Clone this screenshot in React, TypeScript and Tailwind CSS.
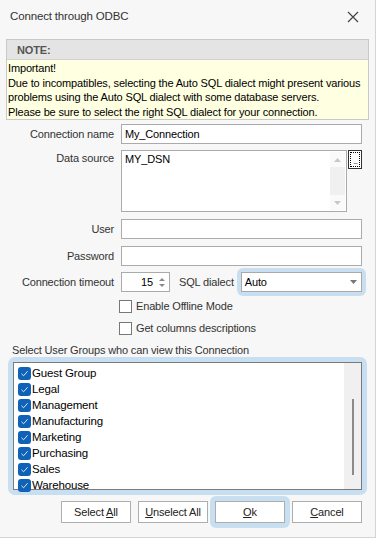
import React from "react";

const groups = ["Guest Group", "Legal", "Management", "Manufacturing", "Marketing", "Purchasing", "Sales", "Warehouse"];

function Check() {
  return (
    <span className="w-[13px] h-[13px] rounded-[3px] bg-[#0f62b6] flex items-center justify-center shrink-0">
      <svg width="9" height="9" viewBox="0 0 9 9">
        <path d="M1.5 4.8 L3.6 6.8 L7.6 2.2" fill="none" stroke="#d7e6f5" strokeWidth="1" />
      </svg>
    </span>
  );
}

function Label({ children }: { children: React.ReactNode }) {
  return <div className="w-[114px] shrink-0 text-right text-[#333]">{children}</div>;
}

export default function App() {
  return (
    <div
      className="w-[376px] h-[538px] bg-[#f7f7f7] border-r border-b border-[#d4d4d4] text-[11px] leading-[16px] tracking-[-0.15px] text-[#222] overflow-hidden"
      style={{ fontFamily: '"Liberation Sans", Arial, sans-serif' }}
    >
      {/* title bar */}
      <div className="h-[39px] flex items-start justify-between pl-[10px] pr-[16px] pt-[8px] text-[11.5px]">
        <span className="text-[#333]">Connect through ODBC</span>
        <svg width="12" height="12" viewBox="0 0 12 12" className="mt-[3px]">
          <path d="M1 1 L11 11 M11 1 L1 11" stroke="#444" strokeWidth="1.2" />
        </svg>
      </div>

      {/* note */}
      <div className="mx-[6px] border border-[#c9c9c9]">
        <div className="h-[20px] bg-[#e4e4e4] border-b border-[#d0d0d0] pl-[10px] flex items-center font-bold text-[#555]">
          NOTE:
        </div>
        <div className="bg-[#ffffe1] px-[1px] pt-[1px] pb-0 leading-[14.5px] text-black whitespace-nowrap">
          <div>Important!</div>
          <div>Due to incompatibles, selecting the Auto SQL dialect might present various</div>
          <div>problems using the Auto SQL dialect with some database servers.</div>
          <div>Please be sure to select the right SQL dialect for your connection.</div>
        </div>
      </div>

      {/* form */}
      <div className="pr-[13px] pt-[4px]">
        <div className="flex items-center gap-[7px] h-[20px]">
          <Label>Connection name</Label>
          <div className="flex-1 h-[20px] bg-white border border-[#ababab] px-[3px] flex items-center text-black">My_Connection</div>
        </div>

        <div className="flex items-start gap-[7px] mt-[6px]">
          <Label>Data source</Label>
          <div className="w-[228px] h-[62px] bg-white border border-[#ababab] flex">
            <div className="flex-1 px-[3px] text-black">MY_DSN</div>
            <div className="w-[15px] my-[1px] mr-[1px] bg-[#f0f0f0] flex flex-col justify-between">
              <div className="h-[15px] bg-[#fafafa] flex items-center justify-center">
                <svg width="7" height="4" viewBox="0 0 7 4"><path d="M0 4 L3.5 0 L7 4 Z" fill="#c8c8c8" /></svg>
              </div>
              <div className="h-[15px] bg-[#fafafa] flex items-center justify-center">
                <svg width="7" height="4" viewBox="0 0 7 4"><path d="M0 0 L3.5 4 L7 0 Z" fill="#c8c8c8" /></svg>
              </div>
            </div>
          </div>
          <div className="w-[14px] h-[19px] border border-[#333] bg-white p-[1px] -ml-[6px]">
            <div className="w-full h-full border border-dotted border-black flex items-end justify-center text-[8px] leading-[9px] tracking-[-1px]">
              ...
            </div>
          </div>
        </div>

        <div className="flex items-center gap-[7px] mt-[7px]">
          <Label>User</Label>
          <div className="flex-1 h-[20px] bg-white border border-[#ababab]" />
        </div>

        <div className="flex items-center gap-[7px] mt-[7px]">
          <Label>Password</Label>
          <div className="flex-1 h-[20px] bg-white border border-[#ababab]" />
        </div>

        <div className="flex items-center gap-[7px] mt-[6px] h-[20px]">
          <Label>Connection timeout</Label>
          <div className="w-[49px] shrink-0 h-[20px] bg-white border border-[#ababab] flex items-center text-black">
            <span className="flex-1 text-right pr-[4px]">15</span>
            <div className="w-[12px] flex flex-col items-center gap-[3px] pr-[3px]">
              <svg width="6" height="3" viewBox="0 0 6 3"><path d="M0 3 L3 0 L6 3 Z" fill="#8a8a8a" /></svg>
              <svg width="6" height="3" viewBox="0 0 6 3"><path d="M0 0 L3 3 L6 0 Z" fill="#8a8a8a" /></svg>
            </div>
          </div>
          <span className="ml-[2px] text-[#333] whitespace-nowrap">SQL dialect</span>
          <div className="flex-1 relative">
            <div className="absolute -inset-[4px] rounded-[6px] bg-[#c8dff1]" />
            <div className="relative h-[20px] bg-white border border-[#a9a9a9] flex items-center px-[3px] text-black">
              <span className="flex-1">Auto</span>
              <svg width="7" height="4" viewBox="0 0 7 4" className="mr-[1px]"><path d="M0 0 L3.5 4 L7 0 Z" fill="#777" /></svg>
            </div>
          </div>
        </div>

        <div className="flex items-center gap-[4px] mt-[6px] ml-[119px]">
          <span className="w-[13px] h-[13px] bg-white border border-[#777]" />
          <span className="text-[#333]">Enable Offline Mode</span>
        </div>
        <div className="flex items-center gap-[4px] mt-[6px] ml-[119px]">
          <span className="w-[13px] h-[13px] bg-white border border-[#777]" />
          <span className="text-[#333]">Get columns descriptions</span>
        </div>
      </div>

      {/* groups */}
      <div className="pl-[12px] mt-[6px] text-[#333]">Select User Groups who can view this Connection</div>
      <div className="mx-[8px] -mt-[1px] h-[138px] rounded-[7px] bg-[#c8dff1] p-[5px]">
        <div className="h-full bg-white border border-[#7a7a7a] flex">
          <div className="flex-1 pl-[4px] pt-[2px] flex flex-col">
            {groups.map((g) => (
              <div key={g} className="h-[16px] flex items-center gap-[1px] text-black text-[11.5px]">
                <Check />
                <span>{g}</span>
              </div>
            ))}
          </div>
          <div className="w-[17px] bg-[#f0f0f0] flex justify-center pt-[36px]">
            <div className="w-[2px] h-[76px] bg-[#8a8a8a]" />
          </div>
        </div>
      </div>

      {/* buttons */}
      <div className="flex justify-end gap-[7px] pr-[13px] mt-[6px]">
        <button className="w-[70px] h-[22px] bg-white border border-[#adadad] text-[#222]">
          Select <u>A</u>ll
        </button>
        <button className="w-[70px] h-[22px] bg-white border border-[#adadad] text-[#222]">
          <u>U</u>nselect All
        </button>
        <div className="relative w-[70px] h-[22px]">
          <div className="absolute -inset-[5px] rounded-[6px] bg-[#c8dff1]" />
          <button className="relative w-[70px] h-[22px] bg-white border border-[#adadad] text-[#222]">
            <u>O</u>k
          </button>
        </div>
        <button className="w-[70px] h-[22px] bg-white border border-[#adadad] text-[#222]">
          <u>C</u>ancel
        </button>
      </div>
    </div>
  );
}
